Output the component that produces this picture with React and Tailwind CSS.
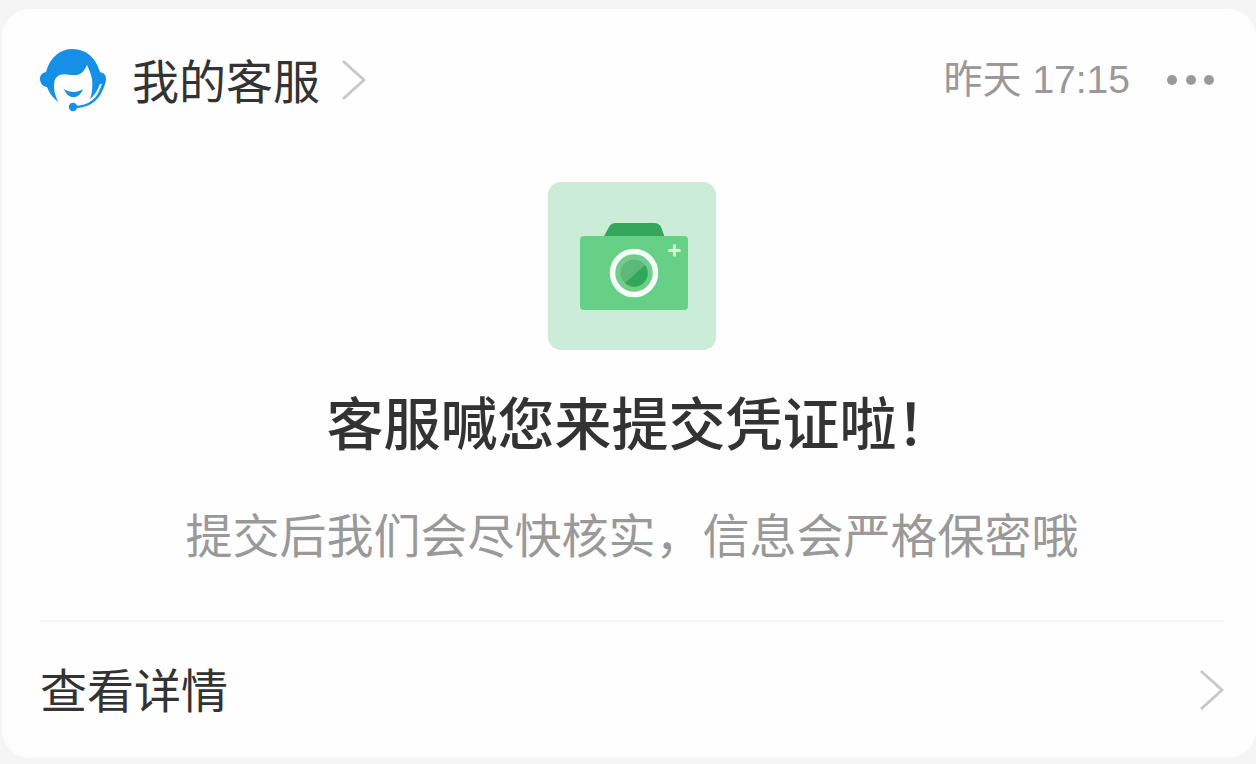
function AgentIcon() {
  return (
    <svg viewBox="0 0 66 64" className="h-16 w-[66px] shrink-0" aria-hidden="true">
      <path
        fill="#168fe6"
        d="M6 24C10 9 20 1 33 1s23 9 27 23c4 1 6 3 6 7 0 3-1 6-4 8-3 6-7 10-12 13 2-7 3-14 2-21-1-5-3-10-5-14-2 5-5 9-10 10-6 1-12-2-17 0-5 2-6 6-6 12 0 5 2 10 4 15-5-4-9-9-11-15-4 0-7-4-7-8s2-6 6-7Z"
      />
      <path d="M24 41c6 4 13 4 19 0-4 11-15 11-19 0Z" fill="#168fe6" />
      <path d="M61 36C57 47 50 54 42 56" fill="none" stroke="#fff" strokeWidth="2" />
      <path d="M64 35C60 50 50 59 34 59" fill="none" stroke="#168fe6" strokeWidth="2.5" />
      <circle cx="33" cy="59" r="4.2" fill="#168fe6" />
    </svg>
  );
}

function CameraIcon() {
  return (
    <svg viewBox="0 0 168 168" className="size-[168px]" aria-hidden="true">
      <rect width="168" height="168" rx="13" fill="#cbecd7" />
      <path d="M55 56 61 45q2-4 7-4h38q5 0 7 4l4 11Z" fill="#34a65c" />
      <rect x="32" y="54" width="108" height="74" rx="4" fill="#65d086" />
      <circle cx="86" cy="91" r="21.5" fill="#72cd8d" stroke="#f5fff7" strokeWidth="5.5" />
      <circle cx="86" cy="91" r="13.5" fill="#5cb978" />
      <path d="M97 83A13.5 13.5 0 0 1 77 101Z" fill="#30a75b" />
      <path d="M126.500 62.500v12M120.500 68.500h12" stroke="#d5fbd3" strokeWidth="2.800" />
    </svg>
  );
}

function Chevron() {
  return (
    <svg viewBox="0 0 26 44" className="h-11 w-[26px] shrink-0" aria-hidden="true">
      <path d="M3 3 24 22 3 41" fill="none" stroke="#c8c8c8" strokeWidth="3" strokeLinejoin="round" />
    </svg>
  );
}

export default function App() {
  return (
    <main className="min-h-screen bg-[#f5f5f5] pt-[9px] pb-[6px] pl-[2px] font-['Noto_Sans_CJK_SC',sans-serif] text-[#333]">
      <article className="rounded-[28px] bg-[#fefefe] pr-8 pl-[38px]">
        <header className="flex items-center justify-between pt-9 pr-2">
          <a href="#service" className="flex items-center">
            <AgentIcon />
            <span className="ml-[26px] pb-[2px] text-[47px] leading-[68px]">我的客服</span>
            <span className="ml-5">
              <Chevron />
            </span>
          </a>
          <div className="flex items-center text-[#999]">
            <time className="font-['Liberation_Sans','Noto_Sans_CJK_SC',sans-serif] text-[39px] leading-[70px]">
              昨天 17:15
            </time>
            <button type="button" aria-label="更多" className="ml-9 flex h-11 items-center">
              <svg viewBox="0 0 50 12" className="h-3 w-[50px]" aria-hidden="true">
                <circle cx="6" cy="6" r="5" fill="#999" />
                <circle cx="25" cy="6" r="5" fill="#999" />
                <circle cx="43" cy="6" r="5" fill="#999" />
              </svg>
            </button>
          </div>
        </header>
        <section className="flex flex-col items-center pt-[67px] pb-[52px] text-center">
          <CameraIcon />
          <h1 className="mt-7 pl-4 text-[57px] leading-[84px] font-medium">客服喊您来提交凭证啦！</h1>
          <p className="mt-9 text-[47px] leading-[70px] text-[#999]">
            提交后我们会尽快核实，信息会严格保密哦
          </p>
        </section>
        <a
          href="#details"
          className="flex items-center justify-between border-t-2 border-[#f5f5f5] py-8 text-[47px] leading-[68px]"
        >
          <span className="pb-1">查看详情</span>
          <Chevron />
        </a>
      </article>
    </main>
  );
}
